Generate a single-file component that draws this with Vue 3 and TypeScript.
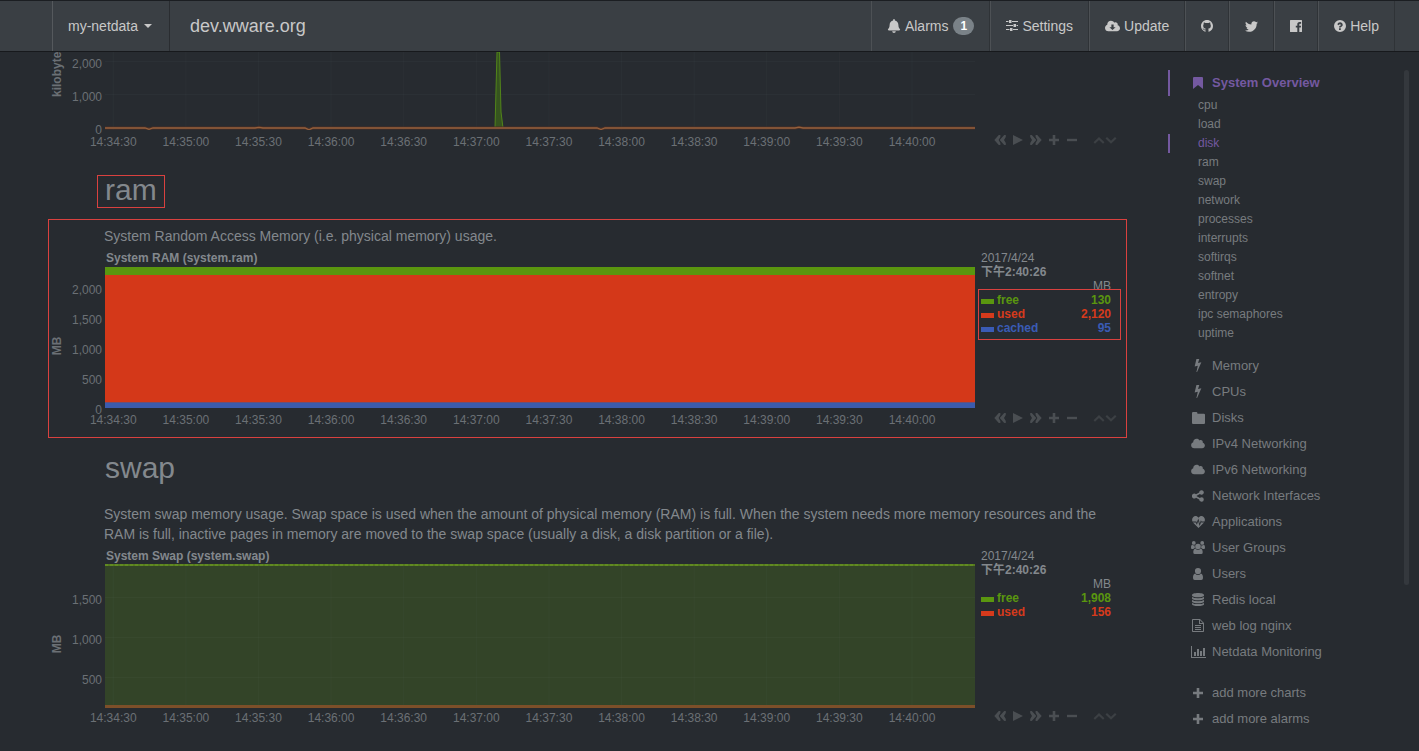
<script setup lang="ts">
interface Tick { label: string; y: number }
interface Row { name: string; value: string; color: string }
interface Chart {
  id: string
  heading?: string
  text?: string
  title?: string
  unit: string
  unitY: number
  plot: number
  ticks: Tick[]
  rows: Row[]
  boxed: boolean
}

const green = '#5a960f'
const red = '#d63a1c'
const blue = '#3a5bb5'

const times = ['14:34:30', '14:35:00', '14:35:30', '14:36:00', '14:36:30', '14:37:00', '14:37:30', '14:38:00', '14:38:30', '14:39:00', '14:39:30', '14:40:00']
const timeX = (i: number): string => (0.95 + i * 8.346).toFixed(2) + '%'

const charts: Chart[] = [
  {
    id: 'disk', unit: 'kilobytes/s', unitY: 14, plot: 78, boxed: false, rows: [],
    ticks: [{ label: '2,000', y: 10 }, { label: '1,000', y: 43 }, { label: '0', y: 76 }],
  },
  {
    id: 'ram', heading: 'ram', text: 'System Random Access Memory (i.e. physical memory) usage.',
    title: 'System RAM (system.ram)', unit: 'MB', unitY: 79, plot: 141, boxed: true,
    ticks: [{ label: '2,000', y: 21 }, { label: '1,500', y: 51 }, { label: '1,000', y: 81 }, { label: '500', y: 111 }, { label: '0', y: 141 }],
    rows: [
      { name: 'free', value: '130', color: green },
      { name: 'used', value: '2,120', color: red },
      { name: 'cached', value: '95', color: blue },
    ],
  },
  {
    id: 'swap', heading: 'swap',
    text: 'System swap memory usage. Swap space is used when the amount of physical memory (RAM) is full. When the system needs more memory resources and the RAM is full, inactive pages in memory are moved to the swap space (usually a disk, a disk partition or a file).',
    title: 'System Swap (system.swap)', unit: 'MB', unitY: 79, plot: 141, boxed: false,
    ticks: [{ label: '1,500', y: 33 }, { label: '1,000', y: 73 }, { label: '500', y: 113 }],
    rows: [
      { name: 'free', value: '1,908', color: green },
      { name: 'used', value: '156', color: red },
    ],
  },
]

interface Glyph { box: string; d: string; w: number; h: number }
const cloudPath = 'M537.6 226.6c4.1-10.7 6.4-22.4 6.4-34.6 0-53-43-96-96-96-19.7 0-38.1 6-53.3 16.2C367 64.2 315.3 32 256 32c-88.4 0-160 71.6-160 160 0 2.7.1 5.4.2 8.1C40.2 219.8 0 273.2 0 336c0 79.5 64.5 144 144 144h368c70.7 0 128-57.3 128-128 0-61.9-44-113.6-102.4-125.4z'
const glyphs: Record<string, Glyph> = {
  bell: { box: '0 0 448 512', w: 14, h: 14, d: 'M224 512c35.32 0 63.97-28.65 63.97-64H160.03c0 35.35 28.65 64 63.97 64zm215.39-149.71c-19.32-20.76-55.47-51.99-55.47-154.29 0-77.7-54.48-139.9-127.94-155.16V32c0-17.67-14.32-32-31.98-32s-31.98 14.33-31.98 32v20.84C118.56 68.1 64.08 130.3 64.08 208c0 102.3-36.15 133.53-55.47 154.29-6 6.45-8.66 14.16-8.61 21.71.11 16.4 12.98 32 32.1 32h383.8c19.12 0 32-15.6 32.1-32 .05-7.55-2.61-15.27-8.61-21.71z' },
  sliders: { box: '0 0 12 12', w: 12, h: 12, d: 'M0 1h2.500v1H0zM3 0h2.500v3H3zM6 1h6v1H6zM0 5h7v1H0zM7.500 4H10v3H7.500zM10.500 5H12v1h-1.500zM0 9h3.500v1H0zM4 8h2.500v3H4zM7 9h5v1H7z' },
  update: { box: '0 0 640 512', w: 15, h: 12, d: cloudPath + 'M272 190h96v120h84L320 430 188 310h84z' },
  github: { box: '0 0 16 16', w: 12, h: 12, d: 'M8 0C3.58 0 0 3.58 0 8c0 3.54 2.29 6.53 5.47 7.59.4.07.55-.17.55-.38 0-.19-.01-.82-.01-1.49-2.01.37-2.53-.49-2.69-.94-.09-.23-.48-.94-.82-1.13-.28-.15-.68-.52-.01-.53.63-.01 1.08.58 1.23.82.72 1.21 1.87.87 2.33.66.07-.52.28-.87.51-1.07-1.78-.2-3.64-.89-3.64-3.95 0-.87.31-1.59.82-2.15-.08-.2-.36-1.02.08-2.12 0 0 .67-.21 2.2.82.64-.18 1.32-.27 2-.27s1.36.09 2 .27c1.53-1.04 2.2-.82 2.2-.82.44 1.1.16 1.92.08 2.12.51.56.82 1.27.82 2.15 0 3.07-1.87 3.75-3.65 3.95.29.25.54.73.54 1.48 0 1.07-.01 1.93-.01 2.2 0 .21.15.46.55.38A8.01 8.01 0 0 0 16 8c0-4.42-3.58-8-8-8z' },
  twitter: { box: '0 0 512 512', w: 13, h: 13, d: 'M459.37 151.716c.325 4.548.325 9.097.325 13.645 0 138.72-105.583 298.558-298.558 298.558-59.452 0-114.68-17.219-161.137-47.106 8.447.974 16.568 1.299 25.34 1.299 49.055 0 94.213-16.568 130.274-44.832-46.132-.975-84.792-31.188-98.112-72.772 6.498.974 12.995 1.624 19.818 1.624 9.421 0 18.843-1.3 27.614-3.573-48.081-9.747-84.143-51.98-84.143-102.985v-1.299c13.969 7.797 30.214 12.67 47.431 13.319-28.264-18.843-46.781-51.005-46.781-87.391 0-19.492 5.197-37.36 14.294-52.954 51.655 63.675 129.3 105.258 216.365 109.807-1.624-7.797-2.599-15.918-2.599-24.04 0-57.828 46.782-104.934 104.934-104.934 30.213 0 57.502 12.67 76.67 33.137 23.715-4.548 46.456-13.32 66.599-25.34-7.798 24.366-24.366 44.833-46.132 57.827 21.117-2.273 41.584-8.122 60.426-16.243-14.292 20.791-32.161 39.308-52.628 54.253z' },
  facebook: { box: '0 0 12 12', w: 12, h: 12, d: 'M.6 0H11.400Q12 0 12 .6V11.400Q12 12 11.400 12H9.300V7.500H10.800L11.100 5.700H9.300V4.700C9.300 4.100 9.500 3.800 10.200 3.800H11.100V2.100H9.600C8 2.100 7.300 3 7.300 4.400V5.700H5.800V7.500H7.300V12H.6Q0 12 0 11.400V.6Q0 0 .6 0z' },
  help: { box: '0 0 12 12', w: 12, h: 12, d: 'M6 0A6 6 0 1 1 6 12A6 6 0 1 1 6 0zM5 8.300V10H6.800V8.300zM3.300 4.300L4.600 5.200C5 4.600 5.400 4.200 6 4.200C6.500 4.200 6.900 4.500 6.900 4.900C6.900 5.300 6.600 5.500 6.100 5.800C5.400 6.200 5 6.700 5 7.600H6.700C6.700 7.200 7 7 7.500 6.700C8.200 6.200 8.700 5.700 8.700 4.700C8.700 3.300 7.500 2.300 6.100 2.300C4.800 2.300 3.900 3 3.300 4.300z' },
  bookmark: { box: '0 0 10 12', w: 10, h: 12, d: 'M1 0H9Q10 0 10 1V12L5 8 0 12V1Q0 0 1 0z' },
  bolt: { box: '0 0 8 14', w: 8, h: 13, d: 'M2.300 0H5.400L4 4.300 7.600 3.500 3 14H2.300L3.800 7.300 .4 8.100z' },
  folder: { box: '0 0 12 11', w: 13, h: 12, d: 'M1 0H4Q5 0 5 1V1.500H11Q12 1.500 12 2.500V10Q12 11 11 11H1Q0 11 0 10V1Q0 0 1 0z' },
  cloud: { box: '0 0 640 512', w: 14, h: 11, d: cloudPath },
  share: { box: '0 0 12 12', w: 12, h: 12, d: 'M9.500 7.200a2.300 2.300 0 1 1-2.300 2.200L4 7.700a2.400 2.400 0 1 1 0-3.400L7.200 2.600a2.300 2.300 0 1 1 .7 1.500L4.700 5.700v.6l3.200 1.600a2.300 2.300 0 0 1 1.600-.7z' },
  heartbeat: { box: '0 0 14 13', w: 13, h: 12, d: 'M7 2C8.500-.2 11-.4 12.600 1 13.900 2.200 14.300 4 13.600 6H10.300L9.600 4.600 8.400 8 6.800 2.800 5.100 7.200 4.700 6H.4C-.3 4 .1 2.200 1.400 1 3-.4 5.500-.2 7 2zM1 7H4L5.200 9.400 6.700 5.700 8.200 10.700 9.800 6.700 10 7H13L7 13z' },
  group: { box: '0 0 14 13', w: 14, h: 13, d: 'M7 2.700A2.800 2.800 0 1 1 7 8.300A2.800 2.800 0 1 1 7 2.700zM4.500 7.600C5.200 8.600 6.100 9 7 9S8.800 8.600 9.500 7.600C11.300 8 11.700 9.600 11.700 11.500Q11.700 13 10.200 13H3.800Q2.300 13 2.300 11.500C2.300 9.600 2.700 8 4.500 7.600zM2.800 0A1.900 1.900 0 1 1 2.800 3.800A1.900 1.900 0 1 1 2.800 0zM11.200 0A1.900 1.900 0 1 1 11.200 3.800A1.900 1.900 0 1 1 11.200 0zM1.100 3.700Q2.700 4.800 3.700 4.200 3.500 6 4 7 2.900 7.200 2.400 8H1Q0 8 0 6.800C0 5.500 .2 4 1.100 3.700zM12.900 3.700Q11.300 4.800 10.300 4.200 10.500 6 10 7 11.100 7.200 11.600 8H13Q14 8 14 6.800C14 5.500 13.800 4 12.900 3.700z' },
  user: { box: '0 0 10 12', w: 10, h: 12, d: 'M5 0A3.100 3.100 0 1 1 5 6.200A3.100 3.100 0 1 1 5 0zM2.300 5.400C3 6.400 4 6.900 5 6.900S7 6.400 7.700 5.400C9.500 5.700 10 7.500 10 10Q10 12 8.300 12H1.700Q0 12 0 10C0 7.500 .5 5.700 2.300 5.400z' },
  database: { box: '0 0 12 13', w: 12, h: 13, d: 'M6 0C9.300 0 12 .9 12 1.900V2.500C12 3.600 9.300 4.300 6 4.300S0 3.600 0 2.500V1.900C0 .9 2.700 0 6 0zM0 4Q2 5.200 6 5.200T12 4V5.500C12 6.600 9.300 7.300 6 7.300S0 6.600 0 5.500zM0 7Q2 8.200 6 8.200T12 7V8.400C12 9.500 9.300 10.200 6 10.200S0 9.500 0 8.400zM0 9.900Q2 11.100 6 11.100T12 9.900V11.200C12 12.300 9.300 13 6 13S0 12.300 0 11.200z' },
  file: { box: '0 0 12 13', w: 12, h: 13, d: 'M1 0H8L12 4V12.200Q12 13 11.200 13H.8Q0 13 0 12.200V.8Q0 0 .8 0zM1 1V12H11V5H7V1zM8 1.200V4H10.800zM3 6H9V7H3zM3 8H9V9H3zM3 10H9V11H3z' },
  bars: { box: '0 0 15 12', w: 15, h: 12, d: 'M0 0H1V11H15V12H0zM3 6H5V10H3zM6 3H8V10H6zM9 5H11V10H9zM12 2H14V10H12z' },
  plus: { box: '0 0 10 10', w: 10, h: 10, d: 'M3.700 0H6.300V3.700H10V6.300H6.300V10H3.700V6.300H0V3.700H3.700z' },
  minus: { box: '0 0 10 10', w: 10, h: 10, d: 'M0 3.800H10V6.200H0z' },
  rewind: { box: '0 0 12 10', w: 12, h: 10, d: 'M4.800 0H6.400V2L4.600 5 6.400 8V10H4.800L.3 5zM10.200 0H11.800V2L10 5 11.800 8V10H10.200L5.700 5z' },
  play: { box: '0 0 10 10', w: 10, h: 10, d: 'M0 0L10 5 0 10z' },
  forward: { box: '0 0 12 10', w: 12, h: 10, d: 'M7.200 0H5.600V2L7.400 5 5.600 8V10H7.200L11.700 5zM1.800 0H.2V2L2 5 .2 8V10H1.800L6.300 5z' },
  up: { box: '0 0 12 10', w: 12, h: 10, d: 'M6 2L11.500 7.300 10 8.800 6 5 2 8.800.5 7.300z' },
  down: { box: '0 0 12 10', w: 12, h: 10, d: 'M6 8.800L11.500 3.500 10 2 6 5.800 2 2 .5 3.500z' },
}

const navItems = [
  { icon: 'bell', label: 'Alarms', badge: '1', name: 'Alarms' },
  { icon: 'sliders', label: 'Settings', badge: '', name: 'Settings' },
  { icon: 'update', label: 'Update', badge: '', name: 'Update' },
  { icon: 'github', label: '', badge: '', name: 'GitHub' },
  { icon: 'twitter', label: '', badge: '', name: 'Twitter' },
  { icon: 'facebook', label: '', badge: '', name: 'Facebook' },
  { icon: 'help', label: 'Help', badge: '', name: 'Help' },
]
const subItems = ['cpu', 'load', 'disk', 'ram', 'swap', 'network', 'processes', 'interrupts', 'softirqs', 'softnet', 'entropy', 'ipc semaphores', 'uptime']
const sideItems = [
  ['bolt', 'Memory'], ['bolt', 'CPUs'], ['folder', 'Disks'], ['cloud', 'IPv4 Networking'], ['cloud', 'IPv6 Networking'],
  ['share', 'Network Interfaces'], ['heartbeat', 'Applications'], ['group', 'User Groups'], ['user', 'Users'],
  ['database', 'Redis local'], ['file', 'web log nginx'], ['bars', 'Netdata Monitoring'],
]
const moreItems = [['plus', 'add more charts'], ['plus', 'add more alarms']]
const controls = [
  ['rewind', 'Pan left'], ['play', 'Play'], ['forward', 'Pan right'], ['plus', 'Zoom in'], ['minus', 'Zoom out'],
  ['up', 'Smaller'], ['down', 'Larger'],
]
</script>

<template>
  <div class="page">
    <header class="nav">
      <button class="host" type="button">my-netdata <span class="caret"></span></button>
      <a class="brand" href="#">dev.wware.org</a>
      <nav class="links">
        <a v-for="n in navItems" :key="n.name" href="#" class="link" :aria-label="n.name">
          <svg :viewBox="glyphs[n.icon].box" :width="glyphs[n.icon].w" :height="glyphs[n.icon].h" fill-rule="evenodd" aria-hidden="true"><path :d="glyphs[n.icon].d" /></svg>
          <span v-if="n.label">{{ n.label }}</span>
          <span v-if="n.badge" class="badge">{{ n.badge }}</span>
        </a>
      </nav>
    </header>

    <div class="body">
      <main class="main">
        <section v-for="c in charts" :key="c.id">
          <h2 v-if="c.heading" class="heading" :class="{ marked: c.boxed }">{{ c.heading }}</h2>
          <div class="panel" :class="{ marked: c.boxed, plain: !c.heading }">
            <p v-if="c.text" class="text">{{ c.text }}</p>
            <div class="chart">
              <div class="graph">
                <h3 v-if="c.title" class="title">{{ c.title }}</h3>
                <svg class="plot" width="100%" :height="c.plot + 17" role="img" :aria-label="c.title || 'Disk I/O'">
                  <g v-if="c.id === 'ram'" shape-rendering="crispEdges">
                    <rect width="100%" height="8" fill="#5a960f" />
                    <rect y="8" width="100%" height="127" fill="#d43819" />
                    <rect y="135" width="100%" height="6" fill="#3b5bad" />
                    <rect y="135" width="100%" height="1" fill="#6a5078" />
                  </g>
                  <g v-if="c.id === 'swap'">
                    <rect width="100%" height="141" fill="#334428" />
                  </g>
                  <g v-if="c.id !== 'ram'" class="grid">
                    <line v-for="t in c.ticks" :key="t.label" x1="0" x2="100%" :y1="t.y - 0.5" :y2="t.y - 0.5" />
                    <line v-for="(t, i) in times" :key="t" :x1="timeX(i)" :x2="timeX(i)" y1="0" :y2="c.plot" />
                  </g>
                  <g v-if="c.id === 'swap'">
                    <rect y="-1" width="100%" height="2" fill="#557a1f" />
                    <line x2="100%" stroke="#6f9a25" stroke-dasharray="3 2" />
                    <rect y="140" width="100%" height="3" fill="#7d4f29" />
                  </g>
                  <g v-if="c.id === 'disk'">
                    <svg width="100%" height="78" viewBox="0 0 870 78" preserveAspectRatio="none">
                      <path d="M390 76L392 0H394.500L396 60 398 76z" fill="#36541f" stroke="#52851a" />
                      <path d="M0 76H40L44 77 48 76H150L154 75.300 158 76H200L204 77.600 208 76H492L496 77.500 500 76H690L694 75.200 698 76H870" fill="none" stroke="#4a2f25" stroke-width="3" />
                      <path d="M0 76H40L44 77.300 48 76H150L154 75.300 158 76H200L204 77.800 208 76H492L496 77.500 500 76H690L694 75.200 698 76H870" fill="none" stroke="#95603c" stroke-width="1.300" />
                    </svg>
                  </g>
                  <g class="axis">
                    <text v-for="t in c.ticks" :key="t.label" x="-3" :y="t.y + 6" text-anchor="end">{{ t.label }}</text>
                    <text v-for="(t, i) in times" :key="t" :x="timeX(i)" :y="c.plot + 16" text-anchor="middle">{{ t }}</text>
                    <text class="unit" :transform="`translate(-44 ${c.unitY}) rotate(-90)`" text-anchor="middle">{{ c.unit }}</text>
                  </g>
                </svg>
              </div>
              <div class="side">
                <table v-if="c.rows.length" class="legend" :class="{ boxed: c.boxed }">
                  <thead>
                    <tr><td colspan="2">2017/4/24</td></tr>
                    <tr><th colspan="2" scope="col">下午2:40:26</th></tr>
                    <tr><td colspan="2" class="num">MB</td></tr>
                  </thead>
                  <tbody>
                    <tr v-for="r in c.rows" :key="r.name" :style="{ color: r.color }">
                      <th scope="row"><span class="swatch"></span>{{ r.name }}</th>
                      <td class="num">{{ r.value }}</td>
                    </tr>
                  </tbody>
                </table>
                <div class="controls">
                  <button v-for="k in controls" :key="k[0]" type="button" :aria-label="k[1]" :class="{ small: k[0] === 'up' || k[0] === 'down', first: k[0] === 'up' }">
                    <svg :viewBox="glyphs[k[0]].box" :width="glyphs[k[0]].w" :height="glyphs[k[0]].h" aria-hidden="true"><path :d="glyphs[k[0]].d" /></svg>
                  </button>
                </div>
              </div>
            </div>
          </div>
        </section>
      </main>

      <aside class="sidebar">
        <nav class="menu">
          <a href="#" class="item current"><span class="ico"><svg :viewBox="glyphs.bookmark.box" width="10" height="12" aria-hidden="true"><path :d="glyphs.bookmark.d" /></svg></span>System Overview</a>
          <a v-for="s in subItems" :key="s" href="#" class="sub" :class="{ active: s === 'disk' }">{{ s }}</a>
          <div v-for="(list, n) in [sideItems, moreItems]" :key="n" class="group" :class="{ more: n === 1 }">
            <a v-for="m in list" :key="m[1]" href="#" class="item">
              <span class="ico"><svg :viewBox="glyphs[m[0]].box" :width="glyphs[m[0]].w" :height="glyphs[m[0]].h" fill-rule="evenodd" aria-hidden="true"><path :d="glyphs[m[0]].d" /></svg></span>{{ m[1] }}
            </a>
          </div>
        </nav>
        <div class="scroll"></div>
      </aside>
    </div>
  </div>
</template>

<style>
body { background: #272b30; }
</style>

<style scoped>
* { box-sizing: border-box; }
.page {
  height: 100vh;
  overflow: hidden;
  background: #272b30;
  color: #83888d;
  font-family: "Liberation Sans", Arial, "Noto Sans CJK SC", sans-serif;
  font-size: 14px;
  line-height: 20px;
}
a { color: inherit; text-decoration: none; }
button { border: 0; padding: 0; background: none; color: inherit; font: inherit; }
svg { display: block; fill: currentColor; }

.nav {
  position: relative;
  z-index: 2;
  display: flex;
  height: 52px;
  padding: 0 24px 0 52px;
  border-top: 1px solid #1b1e22;
  border-bottom: 1px solid #17191c;
  background: #3a3f44;
  color: #c8c8c8;
}
.host {
  display: flex;
  align-items: center;
  width: 118px;
  padding: 0 15px;
  border-left: 1px solid #55595d;
  border-right: 1px solid #2a2d31;
}
.caret { margin-left: 6px; border: 4px solid transparent; border-top-color: currentColor; border-bottom: 0; }
.brand { display: flex; align-items: center; padding: 0 20px; font-size: 18px; }
.links { display: flex; margin-left: auto; }
.link {
  display: flex;
  align-items: center;
  gap: 4px;
  padding: 0 15px;
  border-left: 1px solid #4d5155;
  border-right: 1px solid #2f3337;
}
.badge {
  min-width: 21px;
  padding: 0 7px;
  margin-left: 1px;
  border-radius: 9px;
  background: #7a8288;
  color: #fff;
  font-size: 12px;
  font-weight: bold;
  line-height: 18px;
  text-align: center;
}

.body { display: flex; gap: 41px; }
.main { flex: 1; min-width: 0; padding-left: 48px; }
.heading {
  display: inline-block;
  height: 33px;
  margin: 28px 0 11px 49px;
  padding: 0 7px;
  border: 1px solid transparent;
  font-size: 30px;
  font-weight: normal;
  line-height: 28px;
}
section + section + section .heading { margin-top: 15px; }
.panel { padding: 6px 0 12px; border: 1px solid transparent; }
.panel.plain { padding: 0; border-width: 0 1px; }
.heading.marked, .panel.marked { border-color: #d9413f; }
.text { margin: 0 6px 5px 55px; }
.chart { display: grid; grid-template-columns: minmax(0, 1fr) 151px; padding-left: 56px; }
.title { margin: 0; padding-left: 1px; font-size: 12px; line-height: 14px; height: 16px; }
.plot { overflow: visible; }
.grid line { stroke: #7a8a8a; stroke-opacity: 0.06; }
.axis { fill: #6b7075; font-size: 12px; }
.unit { font-weight: bold; }

.side { display: flex; flex-direction: column; justify-content: space-between; padding-left: 6px; }
.legend { position: relative; width: 130px; border-collapse: collapse; font-size: 12px; line-height: 14px; }
.legend th, .legend td { height: 14px; padding: 0; text-align: left; }
.legend .num { text-align: right; }
.legend tbody td { font-weight: bold; }
.legend.boxed::after {
  content: "";
  position: absolute;
  inset: 38px -10px -5px -3px;
  border: 1px solid #d9413f;
}
.swatch { display: inline-block; width: 13px; height: 5px; margin-right: 3px; background: currentColor; }
.controls { display: flex; height: 14px; padding-left: 10px; margin-top: auto; color: #4a4e52; }
.controls button { display: flex; align-items: center; justify-content: center; width: 18px; }
.controls .small { width: 12px; color: #3c4044; }
.controls .first { margin-left: 12px; }

.sidebar { display: flex; justify-content: space-between; width: 251px; padding: 18px 10px 0 0; }
.menu { flex: 1; font-size: 13px; }
.item { display: flex; align-items: center; height: 26px; padding-left: 20px; border-left: 2px solid transparent; color: #777b7f; }
.ico { display: flex; justify-content: center; width: 16px; margin-right: 6px; padding-bottom: 1px; }
.current { border-color: #7459a0; color: #7459a0; font-weight: bold; }
.sub { display: block; padding-left: 28px; border-left: 2px solid transparent; color: #777b7f; font-size: 12px; line-height: 19px; }
.sub.active { border-color: #7459a0; color: #7459a0; }
.group { margin-top: 10px; }
.group.more { margin-top: 15px; }
.scroll { width: 5px; height: 515px; border-radius: 3px; background: #34383d; }
</style>
